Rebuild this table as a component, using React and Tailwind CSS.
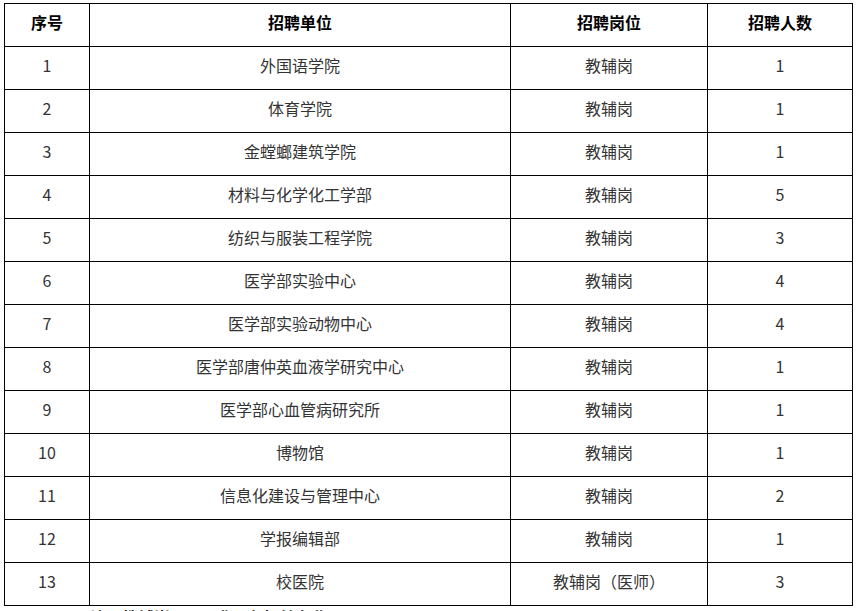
import React from 'react';

const ROWS = [
  ['1', '外国语学院', '教辅岗', '1'],
  ['2', '体育学院', '教辅岗', '1'],
  ['3', '金螳螂建筑学院', '教辅岗', '1'],
  ['4', '材料与化学化工学部', '教辅岗', '5'],
  ['5', '纺织与服装工程学院', '教辅岗', '3'],
  ['6', '医学部实验中心', '教辅岗', '4'],
  ['7', '医学部实验动物中心', '教辅岗', '4'],
  ['8', '医学部唐仲英血液学研究中心', '教辅岗', '1'],
  ['9', '医学部心血管病研究所', '教辅岗', '1'],
  ['10', '博物馆', '教辅岗', '1'],
  ['11', '信息化建设与管理中心', '教辅岗', '2'],
  ['12', '学报编辑部', '教辅岗', '1'],
  ['13', '校医院', '教辅岗（医师）', '3'],
];

const HEADERS = ['序号', '招聘单位', '招聘岗位', '招聘人数'];
const WIDTHS = ['w-[85px]', 'w-[421px]', 'w-[197px]', 'w-[145px]'];

const App = () => {
  return (
    <div
      className="w-[864px] h-[611px] overflow-hidden bg-white pt-[3px] pl-[4px]"
      style={{ fontFamily: '"Noto Sans CJK SC", "Microsoft YaHei", sans-serif' }}
    >
      <table className="border-collapse table-fixed text-[16px] w-[849px]">
        <colgroup>
          {WIDTHS.map((w) => (
            <col key={w} className={w} />
          ))}
        </colgroup>
        <thead>
          <tr className="h-[43px]">
            {HEADERS.map((h) => (
              <th key={h} className="border border-black text-center font-bold text-black p-0 pb-[6px]">
                {h}
              </th>
            ))}
          </tr>
        </thead>
        <tbody>
          {ROWS.map((row) => (
            <tr key={row[0]} className="h-[43px]">
              {row.map((cell, i) => (
                <td key={i} className="border border-black text-center text-[#333] p-0 pb-[6px]">
                  {cell}
                </td>
              ))}
            </tr>
          ))}
        </tbody>
      </table>
      <p className="mt-[3px] pl-[86px] text-[16px] font-bold text-[#222] leading-[16px] whitespace-pre">
        注：教辅岗        要求具有相关专业
      </p>
    </div>
  );
};

export default App;
